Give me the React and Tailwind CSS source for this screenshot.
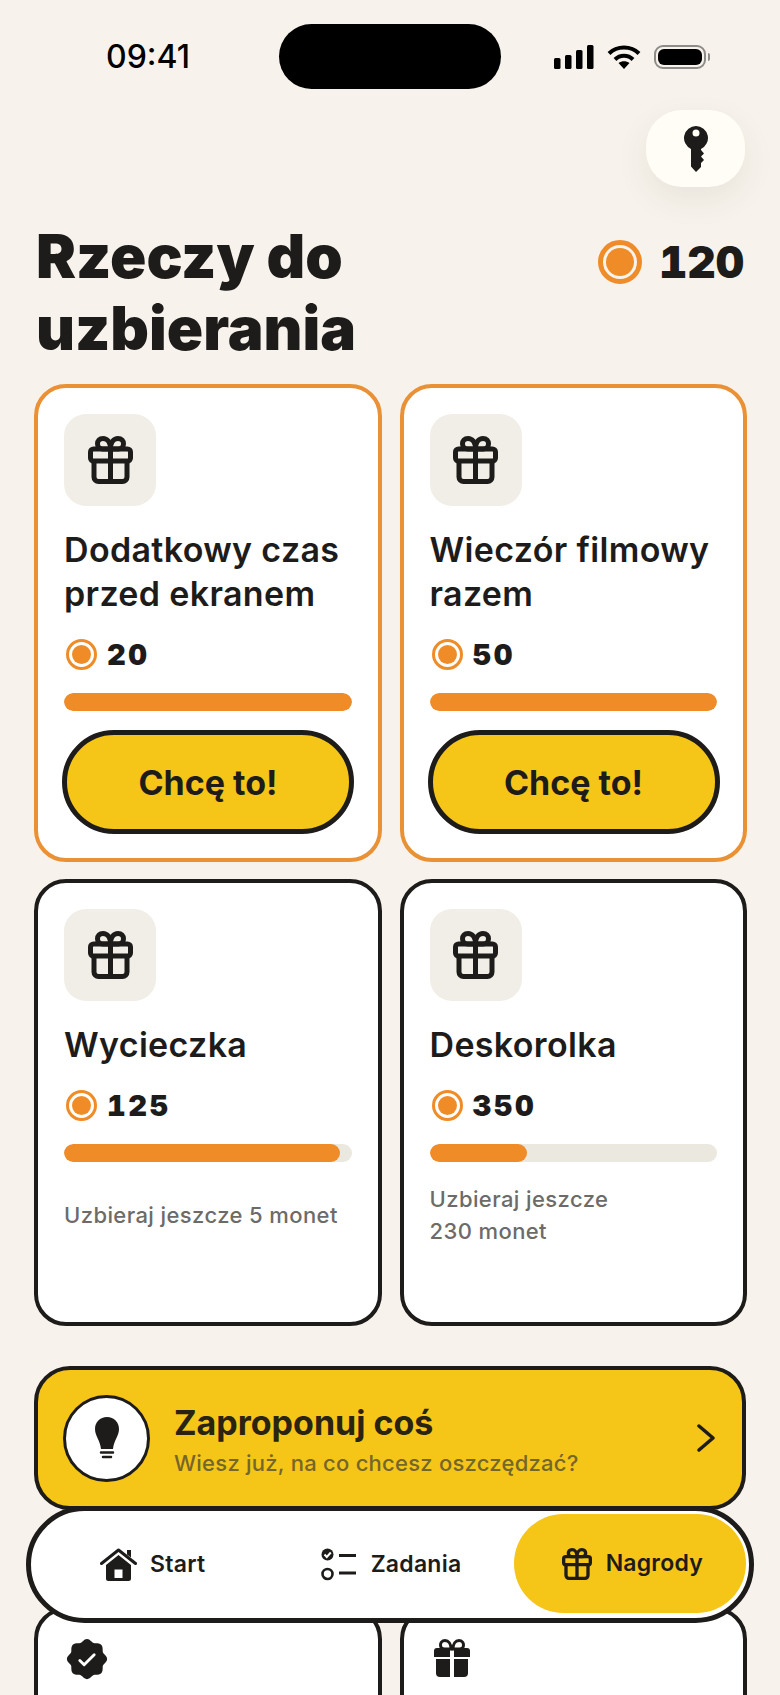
import React from "react";
import { PiSealCheckFill } from "react-icons/pi";

const rewards = [
  { title: ["Dodatkowy czas", "przed ekranem"], cost: 20, progress: 100, ready: true },
  { title: ["Wieczór filmowy", "razem"], cost: 50, progress: 100, ready: true },
  { title: ["Wycieczka"], cost: 125, progress: 96, note: ["Uzbieraj jeszcze 5 monet"] },
  { title: ["Deskorolka"], cost: 350, progress: 34, note: ["Uzbieraj jeszcze", "230 monet"] },
];

function GiftIcon({ className }) {
  return (
    <svg viewBox="0 0 45 48" fill="none" stroke="currentColor" strokeWidth="5" strokeLinejoin="round" className={className}>
      <rect x="2.500" y="13" width="40" height="12" rx="3" />
      <path d="M6 25v16a4.500 4.500 0 0 0 4.500 4.500h24A4.500 4.500 0 0 0 39 41V25" />
      <path d="M22.500 13v32.500" />
      <path d="M22.500 13C22.500 6 19 2.500 15 2.500 11.500 2.500 9.500 5 9.500 7.800 9.500 11 11.500 13 14.500 13Z" />
      <path d="M22.500 13C22.500 6 26 2.500 30 2.500 33.500 2.500 35.500 5 35.500 7.800 35.500 11 33.500 13 30.500 13Z" />
    </svg>
  );
}

function GiftFilled({ className }) {
  return (
    <svg viewBox="0 0 36 38" fill="currentColor" className={className}>
      <path d="M17 10C17 5 14.500 1.500 11 1.500 8 1.500 6.500 3.800 6.500 6 6.500 8.500 8 10 10.500 10Z" fill="none" stroke="currentColor" strokeWidth="3" />
      <path d="M19 10C19 5 21.500 1.500 25 1.500 28 1.500 29.500 3.800 29.500 6 29.500 8.500 28 10 25.500 10Z" fill="none" stroke="currentColor" strokeWidth="3" />
      <path d="M3 9h13v9H0v-6a3 3 0 0 1 3-3Z" />
      <path d="M20 9h13a3 3 0 0 1 3 3v6H20Z" />
      <path d="M2 20h14v18H6a4 4 0 0 1-4-4Z" />
      <path d="M20 20h14v14a4 4 0 0 1-4 4H20Z" />
    </svg>
  );
}

function KeyIcon() {
  return (
    <svg viewBox="0 0 24 46" className="w-6 h-[46px] text-[#1e1c1a]" fill="currentColor">
      <path
        fillRule="evenodd"
        d="M12 0a12 12 0 0 1 5 22.900V24l3 3.500-3 3 3 3.500-3 3v4l-5 5-5-5.500V22.900A12 12 0 0 1 12 0Zm0 3.500a3.500 3.500 0 1 0 0 7 3.500 3.500 0 0 0 0-7Z"
      />
    </svg>
  );
}

function HomeIcon() {
  return (
    <svg viewBox="0 0 37 33" className="w-[37px] h-[33px] text-[#1e1c1a]" fill="currentColor">
      <path d="M1.500 15.500 18.500 2l17 13.500" fill="none" stroke="currentColor" strokeWidth="3" strokeLinecap="round" strokeLinejoin="round" />
      <path d="M27 2h4v7.500l-4-3Z" />
      <path
        fillRule="evenodd"
        d="M18.500 7 31 17v13.500a2.500 2.500 0 0 1-2.500 2.500h-20A2.500 2.500 0 0 1 6 30.500V17ZM14.500 21.500V30h8v-8.500Z"
      />
    </svg>
  );
}

function TasksIcon() {
  return (
    <svg viewBox="0 0 35 33" className="w-[35px] h-[33px] text-[#1e1c1a]" fill="none" stroke="currentColor">
      <circle cx="6.500" cy="6.500" r="6" fill="currentColor" stroke="none" />
      <path d="m3.500 6.500 2.300 2.500 4-4.500" stroke="#fff" strokeWidth="2" />
      <circle cx="6.500" cy="26" r="5" strokeWidth="2.600" />
      <path d="M18 7.500h17M18 25h17" strokeWidth="3" />
    </svg>
  );
}

function BulbIcon() {
  return (
    <svg viewBox="0 0 24 42" className="w-6 h-[42px] text-[#1e1c1a]" fill="currentColor">
      <path d="M12 0C5 0 0 5 0 12c0 7 5 11 6 20h12c1-9 6-13 6-20C24 5 19 0 12 0Z" />
      <path d="M6 35.500h12M8 40h8" stroke="currentColor" strokeWidth="2.500" strokeLinecap="round" />
    </svg>
  );
}

function Coin({ big }) {
  return big ? (
    <div className="w-11 h-11 rounded-full border-[5px] border-[#f08c28] flex items-center justify-center">
      <div className="w-7 h-7 rounded-full bg-[#f08c28]" />
    </div>
  ) : (
    <div className="w-[31px] h-[31px] rounded-full border-[3px] border-[#f08c28] flex items-center justify-center">
      <div className="w-[19px] h-[19px] rounded-full bg-[#f08c28]" />
    </div>
  );
}

function RewardCard({ reward }) {
  return (
    <div
      className={`bg-white rounded-[32px] border-4 px-[26px] pt-[26px] ${
        reward.ready ? "border-[#ea9035] h-[478px]" : "border-[#1e1c1a] h-[447px]"
      }`}
    >
      <div className="w-[92px] h-[92px] rounded-[22px] bg-[#f0eee6] flex items-center justify-center">
        <GiftIcon className="w-[45px] h-[48px] text-[#1e1c1a]" />
      </div>
      <h3 className="mt-[22px] text-[34px] leading-[44px] font-semibold tracking-[0.01em] text-[#1e1c1a]">
        {reward.title.map((line) => (
          <div key={line} className="whitespace-nowrap">
            {line}
          </div>
        ))}
      </h3>
      <div className="mt-[23px] flex items-center gap-[10px] pl-0.5">
        <Coin />
        <span className="text-[29px] leading-[30px] font-black tracking-[0.09em] tabular-nums text-[#1e1c1a]">{reward.cost}</span>
      </div>
      <div className="mt-[23px] h-[18px] rounded-full bg-[#ebe8e0] overflow-hidden">
        <div className="h-full rounded-full bg-[#f08c28]" style={{ width: `${reward.progress}%` }} />
      </div>
      {reward.ready ? (
        <button className="mt-[19px] -mx-0.5 w-[292px] h-[104px] rounded-full bg-[#f5c518] border-[5px] border-[#1e1c1a] text-[34px] font-bold text-[#1e1c1a]">
          Chcę to!
        </button>
      ) : (
        <div className="mt-[21px] h-16 flex flex-col justify-center text-[22px] leading-8 font-medium tracking-[0.4px] text-[#6c6b68]">
          {reward.note.map((line) => (
            <span key={line} className="block whitespace-nowrap">
              {line}
            </span>
          ))}
        </div>
      )}
    </div>
  );
}

export default function App() {
  return (
    <div className="relative w-[780px] h-[1695px] overflow-hidden bg-[#f7f3ec] font-['Inter',sans-serif] text-[#1e1c1a]">
      {/* Status bar */}
      <div className="pt-6 grid grid-cols-[279px_222px_1fr] items-center">
        <div className="pl-[106px] text-[32px] font-medium text-black leading-none">09:41</div>
        <div className="h-[65px] rounded-full bg-black" />
        <div className="pl-[53px] flex items-center gap-[13px]">
          <svg viewBox="0 0 40 24" className="w-10 h-6 text-black" fill="currentColor">
            <rect x="0" y="13" width="6.500" height="11" rx="1.500" />
            <rect x="11" y="10" width="6.500" height="14" rx="1.500" />
            <rect x="22" y="5" width="6.500" height="19" rx="1.500" />
            <rect x="33" y="0" width="6.500" height="24" rx="1.500" />
          </svg>
          <svg viewBox="0 0 34 24" className="w-[34px] h-6 text-black" fill="none" stroke="currentColor">
            <path d="M2 8.500C10 0.500 24 0.500 32 8.500" strokeWidth="4" />
            <path d="M8 14.500C13 9.500 21 9.500 26 14.500" strokeWidth="4" />
            <path d="M11.500 18 17 24l5.500-6C19 15.500 15 15.500 11.500 18Z" fill="currentColor" stroke="none" />
          </svg>
          <div className="flex items-center gap-0.5">
            <div className="w-[52px] h-6 rounded-[9px] border-2 border-[#8d8c88] p-[2px]">
              <div className="w-full h-full rounded-[6px] bg-black" />
            </div>
            <div className="w-[2px] h-2 rounded-r bg-[#8d8c88]" />
          </div>
        </div>
      </div>

      {/* Key button */}
      <div className="mt-[21px] pr-[35px] flex justify-end">
        <button className="w-[99px] h-[77px] rounded-[36px] bg-[#fffdf5] shadow-[0_12px_32px_rgba(60,50,30,0.08)] flex items-center justify-center">
          <KeyIcon />
        </button>
      </div>

      {/* Heading */}
      <div className="mt-[33px] pl-[36px] pr-[36px] flex items-start justify-between">
        <h1 className="text-[60px] leading-[72px] font-black">
          Rzeczy do
          <br />
          uzbierania
        </h1>
        <div className="mt-5 flex items-center gap-[17px]">
          <Coin big />
          <span className="text-[44px] leading-[44px] font-black tabular-nums">120</span>
        </div>
      </div>

      {/* Rewards */}
      <div className="mt-5 px-[34px] grid grid-cols-[347.5px_347.5px] gap-x-[18px] gap-y-[17px]">
        {rewards.map((reward) => (
          <RewardCard key={reward.title[0]} reward={reward} />
        ))}
      </div>

      {/* Suggest banner */}
      <div className="mt-10 mx-[34px] h-[144px] rounded-[36px] bg-[#f5c518] border-4 border-[#1e1c1a] pl-[25px] pr-[27px] flex items-center">
        <div className="w-[87px] h-[87px] rounded-full bg-white border-[3px] border-[#1e1c1a] flex items-center justify-center">
          <BulbIcon />
        </div>
        <div className="ml-[24px] mt-1 flex-1">
          <div className="text-[34px] leading-[42px] font-bold text-[#2a2312]">Zaproponuj coś</div>
          <div className="pt-1 text-[22px] leading-[30px] font-medium tracking-[0.25px] text-[#75662a]">Wiesz już, na co chcesz oszczędzać?</div>
        </div>
        <svg viewBox="0 0 18 28" className="w-[18px] h-7" fill="none" stroke="#1e1c1a" strokeWidth="3.500" strokeLinecap="round" strokeLinejoin="round">
          <path d="m2 2 14 12L2 26" />
        </svg>
      </div>

      {/* Cards under the nav */}
      <div className="mt-[97px] px-[34px] grid grid-cols-[347.5px_347.5px] gap-x-[18px]">
        <div className="h-[200px] bg-white rounded-[32px] border-4 border-[#1e1c1a] pl-[26px] pt-[25px]">
          <PiSealCheckFill className="w-[46px] h-[46px] text-[#1e1c1a]" />
        </div>
        <div className="h-[200px] bg-white rounded-[32px] border-4 border-[#1e1c1a] pl-[30px] pt-[28px]">
          <GiftFilled className="w-9 h-[38px] text-[#1e1c1a]" />
        </div>
      </div>

      {/* Bottom nav */}
      <nav className="absolute left-[26px] top-[1506px] w-[728px] h-[117px] rounded-full bg-white border-[5px] border-[#1e1c1a] p-[3px] grid grid-cols-3">
        <div className="flex items-center justify-center gap-[13px] text-[23px] font-semibold tracking-[0.01em]">
          <HomeIcon />
          Start
        </div>
        <div className="pl-0.5 flex items-center justify-center gap-[15px] text-[23px] font-semibold tracking-[0.01em]">
          <TasksIcon />
          Zadania
        </div>
        <div className="ml-[5px] pl-[5px] mb-0.5 rounded-full bg-[#f5c518] flex items-center justify-center gap-[14px] text-[23px] font-semibold tracking-[0.01em]">
          <GiftIcon className="w-[30px] h-[32px]" />
          Nagrody
        </div>
      </nav>
    </div>
  );
}
